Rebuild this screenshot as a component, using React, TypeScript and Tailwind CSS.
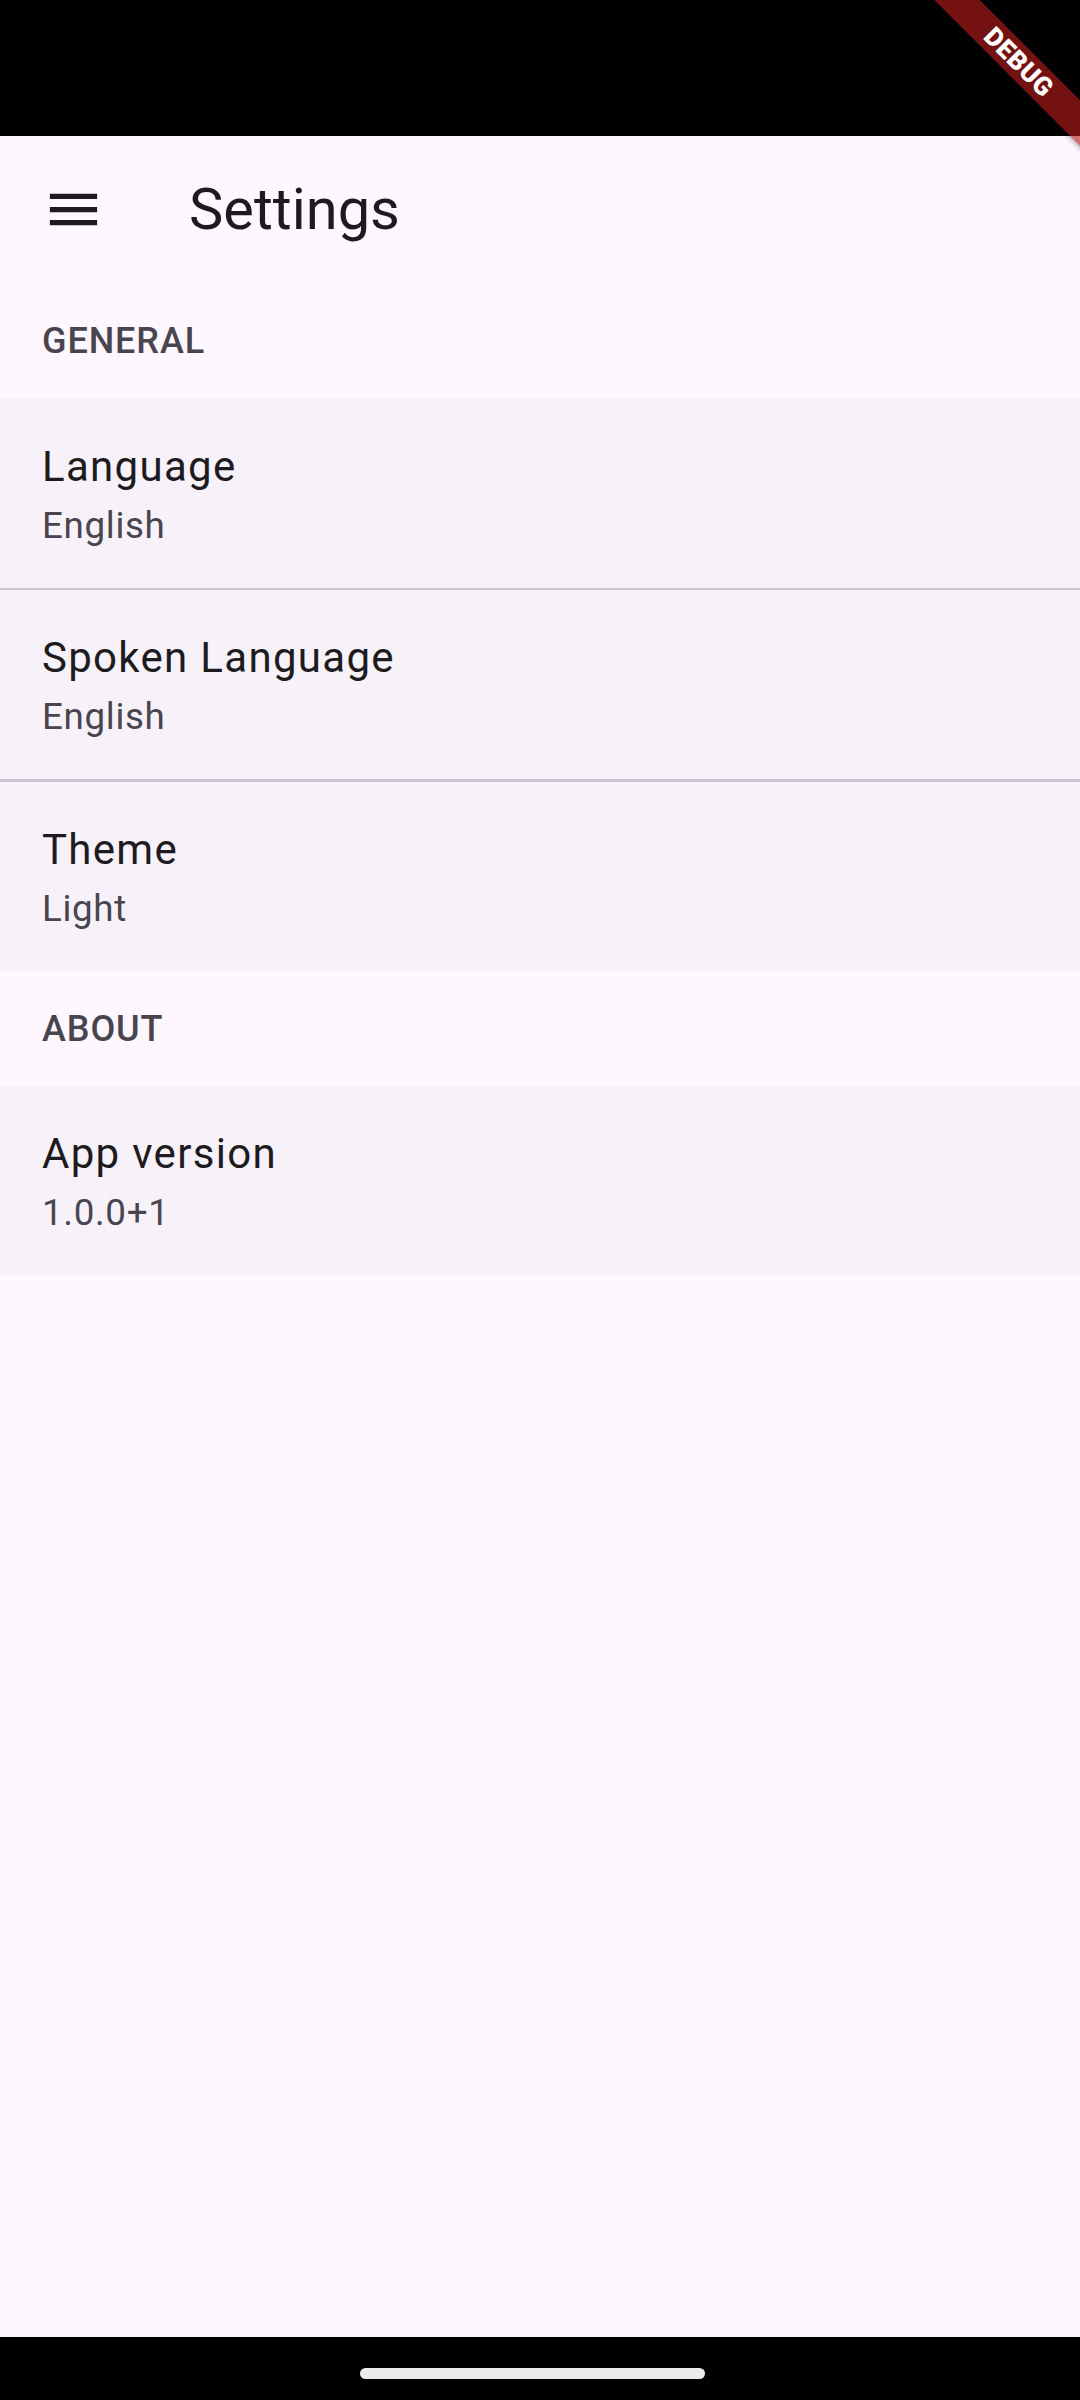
import React from 'react';

const general = [
  { title: 'Language', value: 'English' },
  { title: 'Spoken Language', value: 'English' },
  { title: 'Theme', value: 'Light' },
];

function MenuIcon() {
  return (
    <svg width="63" height="63" viewBox="0 0 24 24" fill="#1d1b20">
      <path d="M3 18h18v-2H3v2zm0-5h18v-2H3v2zm0-7v2h18V6H3z" />
    </svg>
  );
}

function SectionHeader({ label }: { label: string }) {
  return (
    <div className="h-[115.5px] pt-[32px] pl-[42px]">
      <p className="text-[36px] leading-[52px] font-medium tracking-[0.9px] text-[#49454f]">{label}</p>
    </div>
  );
}

function Tile({ title, value }: { title: string; value: string }) {
  return (
    <div className="h-[189px] bg-[#f7f2fa] flex flex-col pt-[36px] pl-[42px]">
      <p className="text-[42px] leading-[63px] tracking-[1.3px] text-[#1d1b20]">{title}</p>
      <p className="mt-[2px] text-[36.75px] leading-[52.5px] tracking-[0.66px] text-[#49454f]">{value}</p>
    </div>
  );
}

export default function App() {
  return (
    <div className="relative w-[1080px] h-[2400px] overflow-hidden flex flex-col bg-[#fef7ff] font-['Roboto',sans-serif]">
      {/* status bar */}
      <div className="h-[136px] shrink-0 bg-black" />

      {/* app bar */}
      <header className="h-[147px] shrink-0 flex items-center pl-[42px]">
        <MenuIcon />
        <h1 className="ml-[84px] text-[57.75px] leading-[73.5px] text-[#1d1b20]">Settings</h1>
      </header>

      <main className="flex-1">
        <SectionHeader label="GENERAL" />
        <div className="flex flex-col">
          {general.map((item, i) => (
            <React.Fragment key={item.title}>
              {i > 0 && <div className="h-[2.6px] bg-[#cac4d0]" />}
              <Tile title={item.title} value={item.value} />
            </React.Fragment>
          ))}
        </div>

        <SectionHeader label="ABOUT" />
        <Tile title="App version" value="1.0.0+1" />
      </main>

      {/* nav bar */}
      <div className="h-[63px] shrink-0 bg-black pt-[31px] pl-[360px]">
        <div className="w-[345px] h-[11px] rounded-full bg-[#ebebeb]" />
      </div>

      {/* debug banner */}
      <div className="absolute left-[869px] top-[46px] w-[300px] h-[32px] rotate-45 bg-[#b71c1c]/[0.63] shadow-[0_0_6px_rgba(0,0,0,0.5)] flex items-center justify-center">
        <span className="text-[26px] leading-none font-black text-white tracking-[0.5px]">DEBUG</span>
      </div>
    </div>
  );
}
